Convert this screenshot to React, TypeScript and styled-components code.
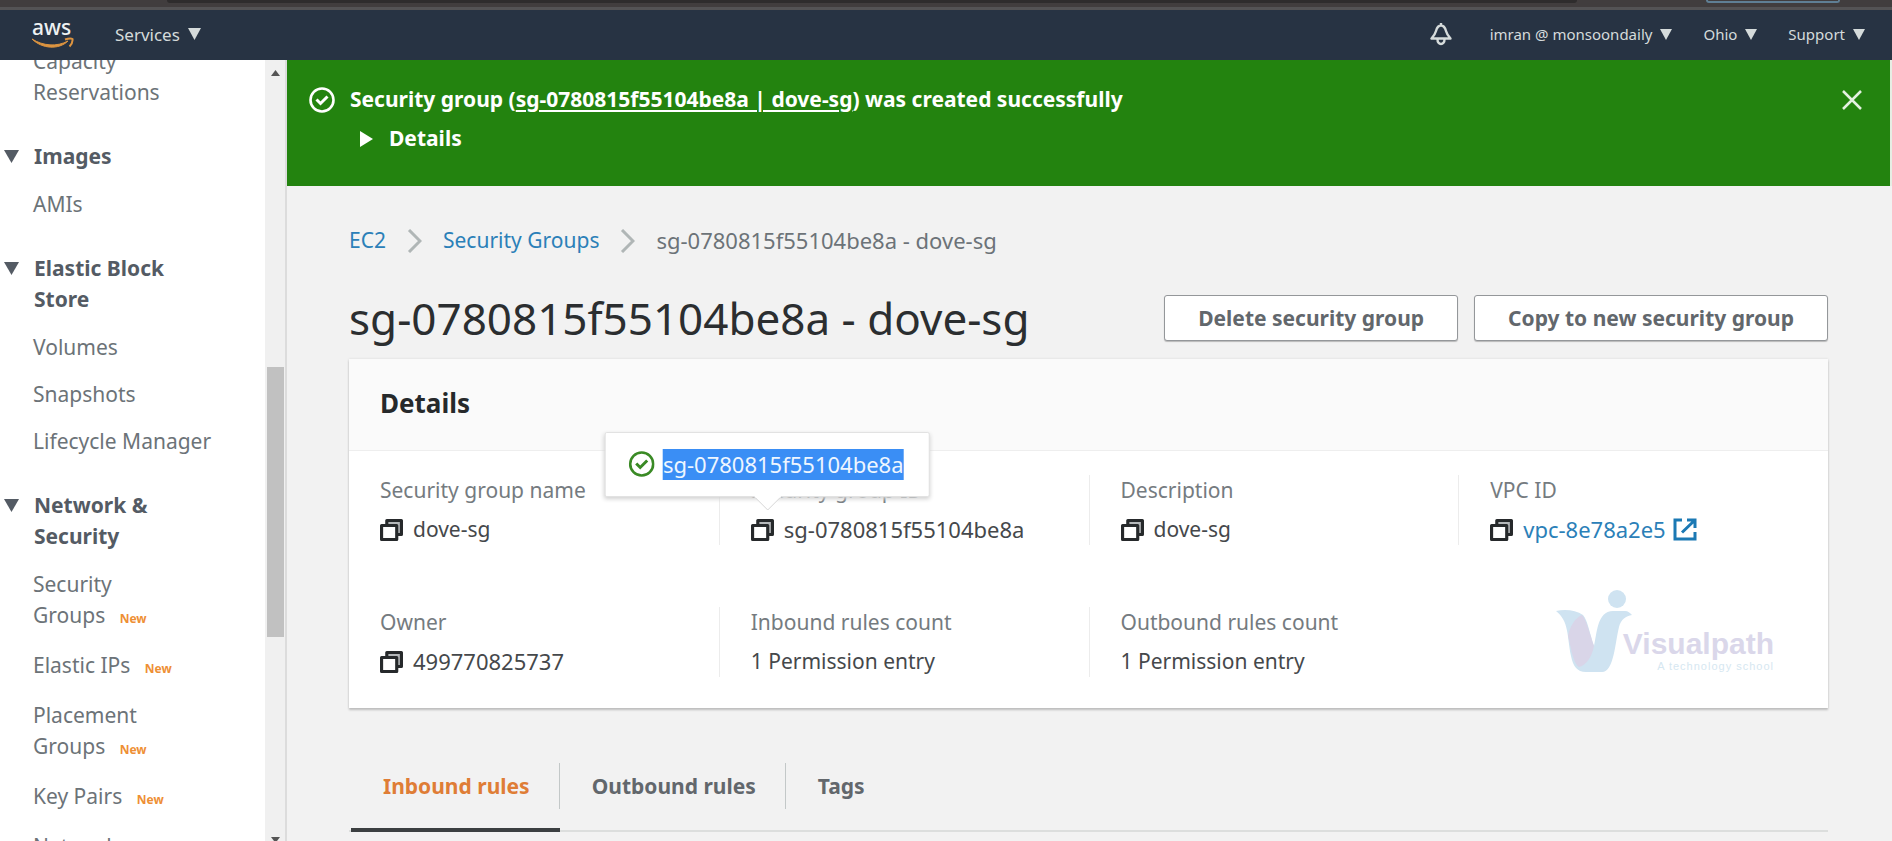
import React from "react";
import styled, { createGlobalStyle, css } from "styled-components";

const GlobalStyle = createGlobalStyle`
  * { box-sizing: border-box; }
  body {
    margin: 0;
    overflow: hidden;
    background: #f2f2f2;
    color: #45484b;
    font-family: "Noto Sans", "Open Sans", sans-serif;
    font-size: 21px;
    line-height: 31px;
  }
  a { color: inherit; text-decoration: none; }
  button { font: inherit; color: inherit; background: none; border: 0; padding: 0; cursor: pointer; }
  h1, h2, h3, ul, ol, dl, dd, p { margin: 0; padding: 0; list-style: none; }
  svg { display: block; flex: none; }
`;

const Page = styled.div`
  display: flex;
  flex-direction: column;
  height: 100vh;
`;

/* Bottom edge of the browser's own toolbar */
const BrowserEdge = styled.div`
  display: flex;
  flex: none;
  height: 10px;
  padding: 0 52px 0 167px;
  background: #413d3e;
  border-bottom: 3px solid #545355;
`;
const AddressBar = styled.div`
  flex: 1;
  height: 3px;
  margin-right: 129px;
  border-radius: 0 0 4px 4px;
  background: #2e2c2d;
`;
const ProfilePill = styled.div`
  width: 134px;
  height: 3px;
  border: 2px solid #5f7f95;
  border-top: 0;
  border-radius: 0 0 20px 20px;
`;

const TopNav = styled.header`
  display: flex;
  align-items: center;
  flex: none;
  height: 50px;
  padding: 0 27px 2px 32px;
  background: #273343;
  color: #d5dbdb;
`;
const LogoLink = styled.a`
  margin-right: 41px;
`;
const NavButton = styled.button<{ $large?: boolean }>`
  display: flex;
  align-items: center;
  gap: 8px;
  font-size: ${(p) => (p.$large ? 17 : 15)}px;
  font-weight: 400;
`;
const NavRight = styled.div`
  display: flex;
  align-items: center;
  gap: 31px;
  margin-left: auto;
`;
const BellButton = styled.button`
  margin-right: 7px;
`;

const Body = styled.div`
  display: flex;
  flex: 1;
  min-height: 0;
`;

const Sidebar = styled.aside`
  display: flex;
  flex: none;
  width: 287px;
  overflow: hidden;
  background: #fff;
  border-right: 2px solid #dcdcdc;
`;
const SideNav = styled.nav`
  flex: 1;
  overflow: hidden;
`;
const SideScroll = styled.div`
  margin-top: -14px;
  padding: 0 50px 0 4px;
`;
const SideGroup = styled.section`
  margin-bottom: 33px;
`;
const SideHeading = styled.h3`
  display: flex;
  gap: 15px;
  margin-bottom: 17px;
  color: #545b64;
  font-size: 21px;
  font-weight: 700;
  line-height: 31px;
`;
const HeadingArrow = styled.span`
  display: flex;
  align-items: center;
  height: 31px;
`;
const SideList = styled.ul`
  padding-left: 29px;
`;
const SideItem = styled.li<{ $isNew?: boolean }>`
  margin-bottom: ${(p) => (p.$isNew ? 19 : 16)}px;
  color: #6c7378;
  &:last-child { margin-bottom: 0; }
`;
const NewBadge = styled.span`
  margin-left: 9px;
  color: #ee8f35;
  font-size: 12px;
  font-weight: 700;
  line-height: 12px;
`;
const NoBreak = styled.span`
  white-space: nowrap;
`;

const ScrollTrack = styled.div`
  display: flex;
  flex-direction: column;
  align-items: center;
  flex: none;
  width: 20px;
  padding-top: 10px;
  background: #f0f0f0;
`;
const ScrollThumb = styled.div`
  width: 17px;
  height: 35%;
  margin: 291px 0 auto;
  background: #c1c1c1;
`;
const ScrollDown = styled.div`
  height: 4px;
  overflow: hidden;
`;

const Main = styled.main`
  flex: 1;
  min-width: 0;
  overflow: hidden;
`;

const Banner = styled.div`
  display: flex;
  align-items: flex-start;
  gap: 15px;
  padding: 24px 28px 32px 22px;
  border-right: 2px solid #e6eee4;
  background: #23830f;
  color: #fff;
  font-weight: 700;
`;
const BannerIcon = styled.span`
  display: flex;
  align-items: center;
  height: 31px;
`;
const BannerText = styled.div`
  flex: 1;
`;
const BannerLink = styled.a`
  text-decoration: underline;
  text-underline-offset: 3px;
`;
const BannerToggle = styled.button`
  display: flex;
  align-items: center;
  gap: 16px;
  margin-top: 8px;
  padding-left: 10px;
  font-weight: 700;
`;
const CloseButton = styled.button`
  display: flex;
  align-items: center;
  height: 31px;
`;

const Content = styled.div`
  padding: 39px 64px 0 62px;
`;
const Breadcrumbs = styled.nav`
  display: flex;
  align-items: center;
  gap: 21px;
  height: 31px;
  color: #6c7378;
`;
const textLink = css`
  color: #2b80b8;
`;
const CrumbLink = styled.a`
  ${textLink}
`;
const CrumbCurrent = styled.span`
  font-size: 22px;
`;

const TitleRow = styled.div`
  display: flex;
  align-items: center;
  gap: 16px;
  margin: 39px 0 18px;
`;
const Title = styled.h1`
  flex: 1;
  color: #2b2e30;
  font-size: 44px;
  font-weight: 400;
  line-height: 46px;
  white-space: nowrap;
`;
const ActionButton = styled.button`
  height: 46px;
  padding: 0 33px;
  border: 1px solid #94979a;
  border-radius: 3px;
  box-shadow: 0 1px 1px #b9b9b9;
  background: #fff;
  color: #62676c;
  font-weight: 700;
  white-space: nowrap;
`;

const Card = styled.section`
  position: relative;
  background: #fff;
  box-shadow: 0 2px 2px #bdbdbd, 0 0 2px #d5d5d5;
`;
const CardHeader = styled.div`
  display: flex;
  align-items: center;
  height: 92px;
  padding: 0 31px 2px;
  border-bottom: 1px solid #eeeeee;
  background: #fafafa;
`;
const CardTitle = styled.h2`
  color: #26292b;
  font-size: 26px;
  font-weight: 700;
`;
const Fields = styled.dl`
  display: grid;
  grid-template-columns: repeat(4, 1fr);
  row-gap: 62px;
  padding: 24px 0 31px;
`;
const Field = styled.div<{ $first?: boolean }>`
  min-height: 70px;
  padding-left: 31px;
  border-left: ${(p) => (p.$first ? "0" : "1px solid #ececec")};
`;
const FieldLabel = styled.dt`
  margin-bottom: 8px;
  color: #757b80;
`;
const FieldValue = styled.dd<{ $id?: boolean }>`
  display: flex;
  align-items: center;
  height: 31px;
  color: #45484b;
  font-size: ${(p) => (p.$id ? 22 : 21)}px;
`;
const CopyAnchor = styled.span`
  position: relative;
  flex: none;
`;
const CopyButton = styled.button`
  display: block;
  width: 33px;
  height: 22px;
`;
const VpcLink = styled.a`
  display: flex;
  align-items: center;
  gap: 7px;
  ${textLink}
`;

const Popover = styled.div`
  position: absolute;
  bottom: calc(100% + 22px);
  left: 50%;
  display: flex;
  align-items: center;
  gap: 8px;
  height: 65px;
  padding: 0 25px 0 23px;
  transform: translateX(-50%);
  border: 1px solid #e2e2e2;
  border-radius: 2px;
  box-shadow: 0 2px 4px #d0d0d0;
  background: #fff;
  white-space: nowrap;
`;
const PopoverArrow = styled.svg`
  position: absolute;
  top: 100%;
  left: calc(50% - 14px);
`;
const SelectedText = styled.span`
  background: #3a8ef5;
  color: #eef6ff;
  line-height: 31px;
`;

const Watermark = styled.div`
  position: absolute;
  top: 231px;
  right: 54px;
  display: flex;
  align-items: flex-end;
`;
const WatermarkText = styled.div`
  display: flex;
  flex-direction: column;
  align-items: flex-end;
  margin-left: -9px;
  font-family: "Liberation Sans", Arial, sans-serif;
`;
const WatermarkName = styled.span`
  color: #dad7ea;
  font-size: 30px;
  font-weight: 700;
  line-height: 30px;
`;
const WatermarkTagline = styled.span`
  color: #d6e7f1;
  font-size: 11px;
  letter-spacing: 1px;
  line-height: 14px;
`;

const Tabs = styled.div`
  display: flex;
  margin-top: 55px;
  padding-left: 2px;
  border-bottom: 2px solid #dcdedd;
`;
const Tab = styled.button<{ $active?: boolean }>`
  margin-bottom: -2px;
  padding-bottom: 19px;
  border-bottom: 4px solid ${(p) => (p.$active ? "#3c3f41" : "transparent")};
  color: ${(p) => (p.$active ? "#df7d36" : "#62676c")};
  font-weight: 700;
`;
const TabLabel = styled.span<{ $last?: boolean }>`
  display: block;
  padding: 0 29px 0 32px;
  border-right: ${(p) => (p.$last ? "0" : "1px solid #c3c8c8")};
  line-height: 46px;
`;

function Caret({ width = 12, height = 11, color = "#d5dbdb" }) {
  return (
    <svg width={width} height={height} viewBox="0 0 12 11" preserveAspectRatio="none" aria-hidden="true">
      <path d="M0 0h12L6 11z" fill={color} />
    </svg>
  );
}

function AwsLogo() {
  return (
    <svg width="42" height="44" viewBox="0 0 42 44" role="img" aria-label="AWS">
      <text x="0" y="23" fontSize="21" fontWeight="500" fill="#eef1f2">aws</text>
      <path d="M0 27c11 7 25 8 36 2-9 9-26 8-36-2z" fill="#dc9440" stroke="#dc9440" strokeLinejoin="round" />
      <path d="M33 27.500c3-1 6-1.500 7.500-.5.3 2-.5 5-3 7.500" fill="none" stroke="#dc9440" strokeWidth="2" />
    </svg>
  );
}

function BellIcon() {
  return (
    <svg width="22" height="24" viewBox="0 0 22 24" fill="none" stroke="#d5dbdb" strokeWidth="2.400" strokeLinejoin="round" aria-hidden="true">
      <path d="M11 1v2.500M11 3.500C8 3.500 6.800 6 6 9c-.8 3.200-2.200 5-4.500 7.500h19C18.200 14 16.800 12.200 16 9c-.8-3-2-5.500-5-5.500z" />
      <path d="M7.500 17c-.3 6.600 7.300 6.600 7 0" />
    </svg>
  );
}

function CheckCircle({ color }: { color: string }) {
  return (
    <svg width="26" height="26" viewBox="0 0 26 26" fill="none" stroke={color} aria-hidden="true">
      <circle cx="13" cy="13" r="11.500" strokeWidth="2.600" />
      <path d="M7.500 12.500l4 4 7-7" strokeWidth="3" />
    </svg>
  );
}

function CopyIcon() {
  return (
    <svg width="23" height="22" viewBox="0 0 22 22" preserveAspectRatio="none" fill="none" stroke="#26292b" strokeWidth="3" strokeLinejoin="round" aria-hidden="true">
      <path d="M6.500 5V1.500h14v14H17" fill="#b5b8ba" />
      <rect x="1.500" y="6.500" width="14.500" height="14" fill="#fff" />
    </svg>
  );
}

function ExternalIcon() {
  return (
    <svg width="24" height="23" viewBox="0 0 24 23" fill="none" stroke="#1b79b4" strokeWidth="3" aria-hidden="true">
      <path d="M9 2H2v19h20v-7" />
      <path d="M14 2h8v8M22 2L9 14.500" />
    </svg>
  );
}

function Chevron() {
  return (
    <svg width="15" height="24" viewBox="0 0 15 24" fill="none" stroke="#b0b6b6" strokeWidth="3" aria-hidden="true">
      <path d="M2 1l11 11L2 23" />
    </svg>
  );
}

function VisualpathMark() {
  return (
    <svg width="76" height="83" viewBox="0 0 76 83" aria-hidden="true">
      <circle cx="61" cy="9" r="9" fill="#cfe3f1" />
      <path d="M0 21c9-2 20-1 27 4 5 6 7 20 11 31 3-12 3-35 19-35h12c3 0 5 2 7 4-6 1-11 4-13 12-4 16-5 45-17 45H30c-9 0-13-6-15-16-4-20-2-35-15-45z" fill="#cfe3f1" />
      <path d="M26 25c5 6 8 20 12 31-2 10-7 19-15 21-6-4-8-20-11-31 2-10 7-18 14-21z" fill="#d9d5e8" />
    </svg>
  );
}

function CopyControl({ label, children }: { label: string; children?: React.ReactNode }) {
  return (
    <CopyAnchor>
      <CopyButton type="button" aria-label={label}><CopyIcon /></CopyButton>
      {children}
    </CopyAnchor>
  );
}

type NavItem = { words: string; last?: string; isNew?: boolean };
const groups: { title?: string; items: NavItem[] }[] = [
  { items: [{ words: "Capacity Reservations" }] },
  { title: "Images", items: [{ words: "AMIs" }] },
  {
    title: "Elastic Block Store",
    items: [{ words: "Volumes" }, { words: "Snapshots" }, { words: "Lifecycle Manager" }],
  },
  {
    title: "Network & Security",
    items: [
      { words: "Security ", last: "Groups", isNew: true },
      { words: "", last: "Elastic IPs", isNew: true },
      { words: "Placement ", last: "Groups", isNew: true },
      { words: "", last: "Key Pairs", isNew: true },
      { words: "Network ", last: "Interfaces", isNew: true },
    ],
  },
];

export default function App() {
  return (
    <Page>
      <GlobalStyle />
      <BrowserEdge>
        <AddressBar />
        <ProfilePill />
      </BrowserEdge>
      <TopNav>
        <LogoLink href="#home"><AwsLogo /></LogoLink>
        <NavButton type="button" $large>Services <Caret width={13} height={12} /></NavButton>
        <NavRight>
          <BellButton type="button" aria-label="Notifications"><BellIcon /></BellButton>
          <NavButton type="button">imran @ monsoondaily <Caret /></NavButton>
          <NavButton type="button">Ohio <Caret /></NavButton>
          <NavButton type="button">Support <Caret /></NavButton>
        </NavRight>
      </TopNav>
      <Body>
        <Sidebar>
          <SideNav aria-label="EC2">
            <SideScroll>
              {groups.map((group, i) => (
                <SideGroup key={i}>
                  {group.title && (
                    <SideHeading>
                      <HeadingArrow><Caret width={15} height={13} color="#545b64" /></HeadingArrow>
                      {group.title}
                    </SideHeading>
                  )}
                  <SideList>
                    {group.items.map((item, j) => (
                      <SideItem key={j} $isNew={item.isNew}>
                        <a href="#nav">
                          {item.words}
                          {item.last && <NoBreak>{item.last} <NewBadge>New</NewBadge></NoBreak>}
                        </a>
                      </SideItem>
                    ))}
                  </SideList>
                </SideGroup>
              ))}
            </SideScroll>
          </SideNav>
          <ScrollTrack aria-hidden="true">
            <svg width="9" height="6" viewBox="0 0 9 6"><path d="M0 6L4.500 0 9 6z" fill="#555" /></svg>
            <ScrollThumb />
            <ScrollDown><Caret width={9} height={6} color="#555" /></ScrollDown>
          </ScrollTrack>
        </Sidebar>
        <Main>
          <Banner role="status">
            <BannerIcon><CheckCircle color="#fff" /></BannerIcon>
            <BannerText>
              <p>
                Security group (<BannerLink href="#group">sg-0780815f55104be8a | dove-sg</BannerLink>) was created
                successfully
              </p>
              <BannerToggle type="button" aria-expanded="false">
                <svg width="13" height="16" viewBox="0 0 13 16"><path d="M0 0l13 8-13 8z" fill="#fff" /></svg>
                Details
              </BannerToggle>
            </BannerText>
            <CloseButton type="button" aria-label="Dismiss">
              <svg width="20" height="20" viewBox="0 0 20 20" fill="none" stroke="#e4f1e1" strokeWidth="2.500">
                <path d="M1 1l18 18M19 1L1 19" />
              </svg>
            </CloseButton>
          </Banner>
          <Content>
            <Breadcrumbs aria-label="Breadcrumbs">
              <CrumbLink href="#ec2">EC2</CrumbLink>
              <Chevron />
              <CrumbLink href="#groups">Security Groups</CrumbLink>
              <Chevron />
              <CrumbCurrent>sg-0780815f55104be8a - dove-sg</CrumbCurrent>
            </Breadcrumbs>
            <TitleRow>
              <Title>sg-0780815f55104be8a - dove-sg</Title>
              <ActionButton type="button">Delete security group</ActionButton>
              <ActionButton type="button">Copy to new security group</ActionButton>
            </TitleRow>
            <Card>
              <CardHeader><CardTitle>Details</CardTitle></CardHeader>
              <Fields>
                <Field $first>
                  <FieldLabel>Security group name</FieldLabel>
                  <FieldValue><CopyControl label="Copy name" />dove-sg</FieldValue>
                </Field>
                <Field>
                  <FieldLabel>Security group ID</FieldLabel>
                  <FieldValue $id>
                    <CopyControl label="Copy ID">
                      <Popover role="status">
                        <CheckCircle color="#3a8a25" />
                        <SelectedText>sg-0780815f55104be8a</SelectedText>
                        <PopoverArrow width="28" height="15" viewBox="0 0 28 15" aria-hidden="true">
                          <path d="M0 0l14 14L28 0" fill="#fff" stroke="#d6d6d6" />
                          <path d="M1 0h26" stroke="#fff" strokeWidth="3" />
                        </PopoverArrow>
                      </Popover>
                    </CopyControl>
                    sg-0780815f55104be8a
                  </FieldValue>
                </Field>
                <Field>
                  <FieldLabel>Description</FieldLabel>
                  <FieldValue><CopyControl label="Copy description" />dove-sg</FieldValue>
                </Field>
                <Field>
                  <FieldLabel>VPC ID</FieldLabel>
                  <FieldValue $id>
                    <CopyControl label="Copy VPC ID" />
                    <VpcLink href="#vpc">vpc-8e78a2e5 <ExternalIcon /></VpcLink>
                  </FieldValue>
                </Field>
                <Field $first>
                  <FieldLabel>Owner</FieldLabel>
                  <FieldValue $id><CopyControl label="Copy owner" />499770825737</FieldValue>
                </Field>
                <Field>
                  <FieldLabel>Inbound rules count</FieldLabel>
                  <FieldValue>1 Permission entry</FieldValue>
                </Field>
                <Field>
                  <FieldLabel>Outbound rules count</FieldLabel>
                  <FieldValue>1 Permission entry</FieldValue>
                </Field>
              </Fields>
              <Watermark>
                <VisualpathMark />
                <WatermarkText>
                  <WatermarkName>Visualpath</WatermarkName>
                  <WatermarkTagline>A technology school</WatermarkTagline>
                </WatermarkText>
              </Watermark>
            </Card>
            <Tabs role="tablist">
              <Tab type="button" role="tab" aria-selected="true" $active><TabLabel>Inbound rules</TabLabel></Tab>
              <Tab type="button" role="tab" aria-selected="false"><TabLabel>Outbound rules</TabLabel></Tab>
              <Tab type="button" role="tab" aria-selected="false"><TabLabel $last>Tags</TabLabel></Tab>
            </Tabs>
          </Content>
        </Main>
      </Body>
    </Page>
  );
}
